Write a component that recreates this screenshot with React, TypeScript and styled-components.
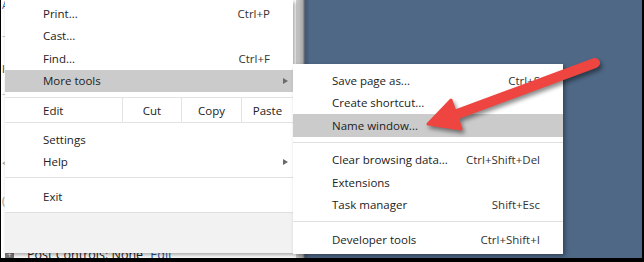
import React from 'react';
import styled, {createGlobalStyle} from 'styled-components';

type Item = {
  label: string;
  shortcut?: string;
  sub?: boolean;
  active?: boolean;
};

const Global = createGlobalStyle`
  body {
    margin: 0;
    background: #000;
  }
`;

const topItems: Item[] = [
  {label: 'Print...', shortcut: 'Ctrl+P'},
  {label: 'Cast...'},
  {label: 'Find...', shortcut: 'Ctrl+F'},
  {label: 'More tools', sub: true, active: true},
];

const midItems: Item[] = [{label: 'Settings'}, {label: 'Help', sub: true}];

const toolItems: Item[] = [
  {label: 'Save page as...', shortcut: 'Ctrl+S'},
  {label: 'Create shortcut...'},
  {label: 'Name window...', active: true},
];

const dataItems: Item[] = [
  {label: 'Clear browsing data...', shortcut: 'Ctrl+Shift+Del'},
  {label: 'Extensions'},
  {label: 'Task manager', shortcut: 'Shift+Esc'},
];

const MenuRows = ({items, pad}: {items: Item[]; pad: number}) => (
  <>
    {items.map((it) => (
      <Row key={it.label} $active={!!it.active} $pad={pad}>
        <span>{it.label}</span>
        {it.shortcut && <Shortcut>{it.shortcut}</Shortcut>}
        {it.sub && <SubArrow />}
      </Row>
    ))}
  </>
);

export default function App() {
  return (
    <Frame>
      <Global />
      <Screen>
        <PagePane>
          <Gutter>
            <GutterMark $color="#2a6ab8">A</GutterMark>
            <GutterMark $color="#bbb" $gap={20}>-</GutterMark>
            <GutterMark $color="#333" $gap={24}>I</GutterMark>
            <GutterMark $color="#bbb" $gap={14}>-</GutterMark>
            <GutterMark $color="#888" $gap={60}>&lt;</GutterMark>
            <GutterMark $color="#888" $gap={28}>(</GutterMark>
          </Gutter>
          <PostBar>
            <PlusBox>+</PlusBox>
            Post Controls: None <PostLink>Edit</PostLink>
          </PostBar>
        </PagePane>
        <ScrollStrip />
        <Desktop />
      </Screen>

      <MainMenu>
        <MenuRows items={topItems} pad={38} />
        <EditRow>
          <EditCell $first>Edit</EditCell>
          <EditCell>Cut</EditCell>
          <EditCell>Copy</EditCell>
          <EditCell>Paste</EditCell>
        </EditRow>
        <Spacer $h={5} />
        <MenuRows items={midItems} pad={38} />
        <Separator $above={4} $below={7} />
        <MenuRows items={[{label: 'Exit'}]} pad={38} />
        <Separator $above={4} $below={0} />
        <Footer />
      </MainMenu>

      <SubMenu>
        <MenuRows items={toolItems} pad={39} />
        <Separator />
        <MenuRows items={dataItems} pad={39} />
        <Separator />
        <MenuRows items={[{label: 'Developer tools', shortcut: 'Ctrl+Shift+I'}]} pad={39} />
      </SubMenu>

      <Annotation viewBox="0 0 644 262" width={644} height={262}>
        <g fill="#ee4540" stroke="#ee4540" strokeLinejoin="round">
          <line x1={595} y1={63} x2={452} y2={116} strokeWidth={10} strokeLinecap="round" />
          <polygon points="428,124 451,100 461,129" strokeWidth={3} />
        </g>
      </Annotation>
    </Frame>
  );
}

const Frame = styled.div`
  position: relative;
  box-sizing: border-box;
  width: 644px;
  height: 262px;
  padding: 0 2px 4px 1px;
  background: #000;
  overflow: hidden;
  font-family: 'Open Sans', 'Noto Sans', sans-serif;
`;

const Screen = styled.div`
  display: flex;
  height: 100%;
  overflow: hidden;
`;

const PagePane = styled.div`
  width: 295px;
  display: flex;
  flex-direction: column;
  justify-content: space-between;
  background: #fff;
`;

const Gutter = styled.div`
  display: flex;
  flex-direction: column;
  padding-left: 1px;
`;

const GutterMark = styled.span<{$color: string; $gap?: number}>`
  margin-top: ${(p) => p.$gap ?? 0}px;
  font-size: 10px;
  line-height: 10px;
  color: ${(p) => p.$color};
`;

const PostBar = styled.div`
  display: flex;
  align-items: center;
  gap: 4px;
  margin-bottom: -5px;
  padding-left: 4px;
  font-size: 12.5px;
  line-height: 17px;
  color: #222;
  white-space: pre;
`;

const PlusBox = styled.span`
  width: 9px;
  height: 11px;
  margin-right: 9px;
  background: #777;
  color: #fff;
  font-size: 9px;
  line-height: 11px;
  text-align: center;
`;

const PostLink = styled.span`
  color: #1a5aa6;
  text-decoration: underline;
`;

const ScrollStrip = styled.div`
  width: 9px;
  background: linear-gradient(to right, #d2d2d2, #a8a8a8 75%, #4a5564);
`;

const Desktop = styled.div`
  flex: 1;
  background: linear-gradient(to right, #3f5775, #4e6886 5px);
`;

const MenuBase = styled.div`
  position: absolute;
  box-sizing: border-box;
  display: flex;
  flex-direction: column;
  background: #fff;
  color: #222;
  font-size: 11.5px;
  box-shadow: 2px 2px 4px rgba(0, 0, 0, 0.35);
`;

const MainMenu = styled(MenuBase)`
  left: 5px;
  top: 0;
  width: 288px;
  height: 253px;
  padding-top: 2px;
`;

const SubMenu = styled(MenuBase)`
  left: 293px;
  top: 64px;
  width: 270px;
  height: 190px;
  padding-top: 5px;
`;

const Row = styled.div<{$active: boolean; $pad: number}>`
  position: relative;
  display: flex;
  align-items: center;
  justify-content: space-between;
  height: 22.5px;
  padding: 0 23px 0 ${(p) => p.$pad}px;
  background: ${(p) => (p.$active ? '#cbcbcb' : 'transparent')};
`;

const Shortcut = styled.span`
  color: #333;
`;

const SubArrow = styled.span`
  position: absolute;
  right: 5px;
  top: 8px;
  border-style: solid;
  border-width: 3.5px 0 3.5px 5px;
  border-color: transparent transparent transparent #6a6a6a;
`;

const EditRow = styled.div`
  display: grid;
  grid-template-columns: 117px 59px 60px 1fr;
  height: 24px;
  margin-top: 5px;
  border-top: 1px solid #e3e3e3;
  border-bottom: 1px solid #e3e3e3;
`;

const EditCell = styled.div<{$first?: boolean}>`
  display: flex;
  align-items: center;
  justify-content: ${(p) => (p.$first ? 'flex-start' : 'center')};
  padding-left: ${(p) => (p.$first ? 38 : 0)}px;
  border-left: ${(p) => (p.$first ? 'none' : '1px solid #e3e3e3')};
`;

const Spacer = styled.div<{$h: number}>`
  height: ${(p) => p.$h}px;
`;

const Separator = styled.div<{$above?: number; $below?: number}>`
  height: 1px;
  margin: ${(p) => p.$above ?? 5}px 0 ${(p) => p.$below ?? 6}px;
  background: #e0e0e0;
`;

const Footer = styled.div`
  flex: 1;
  background: #f2f2f2;
`;

const Annotation = styled.svg`
  position: absolute;
  left: 0;
  top: 0;
  pointer-events: none;
  filter: drop-shadow(2px 3px 2px rgba(0, 0, 0, 0.45));
`;
